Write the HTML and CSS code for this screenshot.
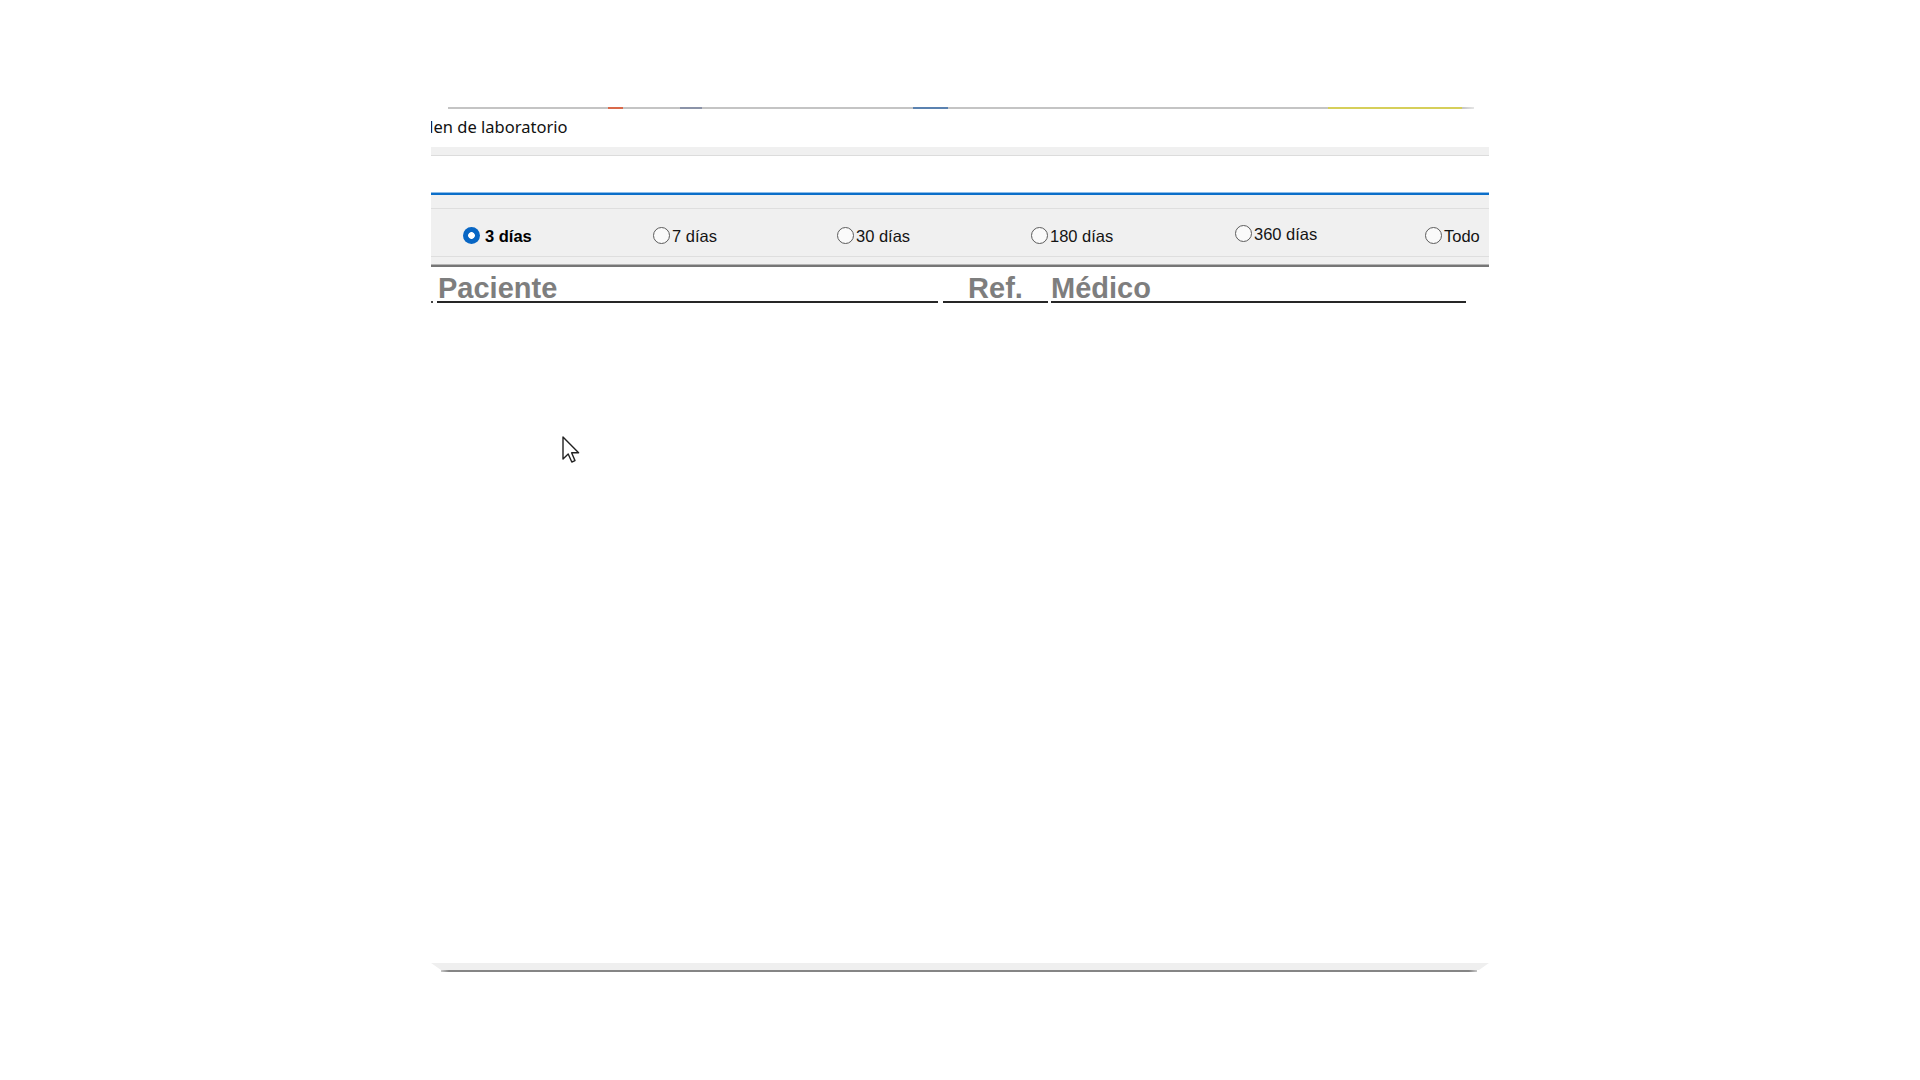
FILE: index.html
```html
<!DOCTYPE html>
<html lang="es">
<head>
<meta charset="utf-8">
<title>Orden de laboratorio</title>
<link rel="stylesheet" href="styles.css">
</head>
<body>
<div class="window">
  <div class="topline">
    <span class="seg seg-g1"></span>
    <span class="seg seg-red"></span>
    <span class="seg seg-g2"></span>
    <span class="seg seg-slate"></span>
    <span class="seg seg-g3"></span>
    <span class="seg seg-blue"></span>
    <span class="seg seg-g4"></span>
    <span class="seg seg-yellow"></span>
    <span class="seg seg-g5"></span>
  </div>
  <div class="title"><span class="title-text">Orden de laboratorio</span></div>
  <div class="panel">
    <div class="band"></div>
    <div class="gap"></div>
    <div class="accent"></div>
    <div class="filters">
      <div class="filter-row">
        <label class="radio radio-on"><span class="dot"></span><span class="lbl">3 días</span></label>
        <label class="radio"><span class="dot"></span><span class="lbl">7 días</span></label>
        <label class="radio"><span class="dot"></span><span class="lbl">30 días</span></label>
        <label class="radio"><span class="dot"></span><span class="lbl">180 días</span></label>
        <label class="radio radio-up"><span class="dot"></span><span class="lbl">360 días</span></label>
        <label class="radio"><span class="dot"></span><span class="lbl">Todo</span></label>
      </div>
    </div>
    <div class="divider"></div>
    <div class="thead">
      <span class="tick"></span>
      <div class="th th-paciente">Paciente</div>
      <div class="th th-ref">Ref.</div>
      <div class="th th-medico">Médico</div>
    </div>
    <div class="tbody"></div>
  </div>
  <div class="bottom">
    <div class="bottom-band"></div>
    <div class="bottom-line"></div>
  </div>
</div>
<svg class="cursor" width="22" height="28" viewBox="0 0 22 28" xmlns="http://www.w3.org/2000/svg">
  <path d="M1 1 L1 23 L6.2 18 L9.8 26 L13 24.6 L9.6 16.8 L16.6 16.8 Z" fill="#ffffff" stroke="#222222" stroke-width="1.4" stroke-linejoin="round"/>
</svg>
</body>
</html>
```
FILE: styles.css
```css
html, body {
  margin: 0;
  padding: 0;
  background: #ffffff;
}

body {
  font-family: "Liberation Sans", Arial, sans-serif;
  color: #000;
  position: relative;
  min-height: 1080px;
}

.window {
  margin-left: 425px;
  width: 1065px;
  padding-top: 107px;
}

/* thin strip from the toolbar above */
.topline {
  display: flex;
  margin-left: 23px;
  width: 1026px;
  height: 2px;
}
.seg { display: block; height: 2px; background: #c4c4c4; }
.seg-g1 { width: 160px; }
.seg-red { width: 15px; background: #d9694a; }
.seg-g2 { width: 57px; }
.seg-slate { width: 22px; background: #8b93a8; }
.seg-g3 { width: 211px; }
.seg-blue { width: 35px; background: #5b82b0; }
.seg-g4 { width: 380px; }
.seg-yellow { width: 134px; background: #d6cf5a; }
.seg-g5 { flex: 1; background: linear-gradient(to right, #c4c4c4, #e6e6e6); }

.title {
  margin-left: 6px;
  width: 1058px;
  height: 38px;
  box-sizing: border-box;
  padding-top: 7px;
  overflow: hidden;
  white-space: nowrap;
}
.title-text {
  display: inline-block;
  margin-left: -27px;
  font-family: "Noto Sans", "Open Sans", sans-serif;
  font-size: 16.5px;
  line-height: 22px;
  color: #111;
}

.panel {
  margin-left: 6px;
  width: 1058px;
}

.band {
  height: 8px;
  background: #f0f0f0;
  border-bottom: 1px solid #dcdcdc;
}
.gap { height: 36px; }
.accent {
  height: 2px;
  background: #0b6ec9;
  border-top: 1px solid #8dbce8;
}

.filters {
  background: #f0f0f0;
  height: 69px;
  box-sizing: border-box;
  padding-top: 13px;
}
.filter-row {
  display: grid;
  grid-template-columns: 190px 184px 194px 204px 190px 1fr;
  align-items: center;
  box-sizing: border-box;
  height: 49px;
  padding: 5px 0 0 32px;
  border-top: 1px solid #dedede;
  border-bottom: 1px solid #dedede;
}

.radio {
  display: flex;
  align-items: center;
  gap: 2px;
  font-size: 16.5px;
  line-height: 19px;
  color: #141414;
}
.radio-up { margin-bottom: 4px; }
.dot {
  width: 17px;
  height: 17px;
  box-sizing: border-box;
  border-radius: 50%;
  border: 1px solid #5c5c5c;
  background: #fafafa;
  flex: none;
}
.lbl { padding-top: 3px; }
.radio-on { gap: 5px; color: #000; font-weight: bold; }
.radio-on .dot {
  border: none;
  background: radial-gradient(circle, #ffffff 0 3px, #0866c4 3.7px);
}

.divider {
  height: 2px;
  background: #767676;
  border-top: 1px solid #b4b4b4;
}

.thead {
  display: flex;
  align-items: flex-end;
  height: 36px;
}
.tick {
  width: 2px;
  height: 2px;
  background: #444;
  margin-right: 4px;
}
.th {
  box-sizing: border-box;
  padding-top: 8px;
  height: 36px;
  font-size: 29px;
  line-height: 26px;
  font-weight: bold;
  color: #7e7e7e;
  border-bottom: 2px solid #262626;
  white-space: nowrap;
}
.th-paciente { width: 501px; padding-left: 1px; margin-right: 5px; }
.th-ref { width: 105px; text-align: center; margin-right: 3px; }
.th-medico { width: 415px; padding-left: 0; }

.tbody { height: 660px; }

.bottom { width: 1058px; margin-left: 6px; }
.bottom-band {
  height: 7px;
  background: #efefef;
  clip-path: polygon(0 0, 100% 0, calc(100% - 10px) 100%, 10px 100%);
}
.bottom-line {
  margin: 0 12px 0 10px;
  height: 2px;
  background: linear-gradient(to right, #c8c8c8, #858585 8px, #858585 calc(100% - 8px), #c8c8c8);
}

.cursor {
  position: absolute;
  left: 562px;
  top: 436px;
}
```
